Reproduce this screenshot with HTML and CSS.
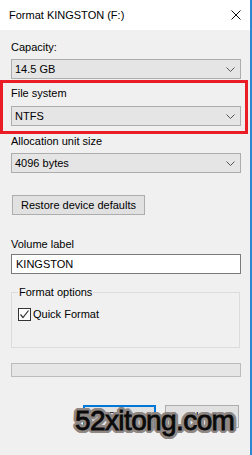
FILE: index.html
```html
<!DOCTYPE html>
<html lang="en">
<head>
    <meta charset="UTF-8">
    <meta name="viewport" content="width=device-width, initial-scale=1.0">
    <title>Format KINGSTON (F:)</title>
    <link rel="stylesheet" href="styles.css">
</head>
<body>
    <div class="window">
        <div class="titlebar">
            <span class="title">Format KINGSTON (F:)</span>
            <svg class="close-x" width="10" height="10" viewBox="0 0 10 10">
                <path d="M0.5 0.5 L9.5 9.5 M9.5 0.5 L0.5 9.5" stroke="#111" stroke-width="1" fill="none"/>
            </svg>
        </div>

        <div class="content">
            <label class="field-label cap-label">Capacity:</label>
            <div class="select first">
                <span>14.5 GB</span>
                <svg class="chevron" width="9" height="5" viewBox="0 0 9 5"><path d="M0.5 0.5 L4.5 4.5 L8.5 0.5" stroke="#555" fill="none"/></svg>
            </div>

            <!-- 赤枠で囲まれた部分 -->
            <div class="highlight">
                <label class="field-label">File system</label>
                <div class="select fs">
                    <span>NTFS</span>
                    <svg class="chevron" width="9" height="5" viewBox="0 0 9 5"><path d="M0.5 0.5 L4.5 4.5 L8.5 0.5" stroke="#555" fill="none"/></svg>
                </div>
            </div>

            <label class="field-label">Allocation unit size</label>
            <div class="select first">
                <span>4096 bytes</span>
                <svg class="chevron" width="9" height="5" viewBox="0 0 9 5"><path d="M0.5 0.5 L4.5 4.5 L8.5 0.5" stroke="#555" fill="none"/></svg>
            </div>

            <button class="btn restore">Restore device defaults</button>

            <label class="field-label vol-label">Volume label</label>
            <div class="textbox">KINGSTON</div>

            <fieldset class="options">
                <legend>Format options</legend>
                <div class="check-row">
                    <span class="checkbox">
                        <svg width="11" height="11" viewBox="0 0 11 11"><path d="M1.5 5.5 L4 8.5 L9.5 1.5" stroke="#333" stroke-width="1.2" fill="none"/></svg>
                    </span>
                    <span>Quick Format</span>
                </div>
            </fieldset>

            <div class="progress"></div>

            <div class="buttons">
                <button class="btn start">Start</button>
                <button class="btn close">Close</button>
            </div>
        </div>

        <div class="watermark">52xitong.com</div>
    </div>
</body>
</html>
```

FILE: styles.css
```css
/* ウィンドウ全体 */
body {
    margin: 0;
    font-family: 'Liberation Sans', Arial, sans-serif;
    font-size: 11px;
    line-height: 15px;
    color: #000;
    background-color: #f0f0f0;
}

.window {
    position: relative;
    width: 252px;
    height: 455px;
    box-sizing: border-box;
    border-right: 2px solid #2b87d4;
    overflow: hidden;
}

/* タイトルバー */
.titlebar {
    height: 30px;
    background-color: #ffffff;
    display: flex;
    align-items: center;
    justify-content: space-between;
    padding: 0 9px;
}

.close-x {
    display: block;
}

.content {
    padding: 0 9px 0 11px;
}

.field-label {
    display: block;
}

.cap-label {
    margin-top: 10px;
}

.vol-label {
    margin-top: 22px;
}

/* ドロップダウン */
.select {
    height: 20px;
    box-sizing: border-box;
    border: 1px solid #adadad;
    background-color: #e5e5e5;
    display: flex;
    align-items: center;
    justify-content: space-between;
    padding: 0 5px 0 3px;
}

.select.first {
    margin-top: 4px;
}

.select.fs {
    margin-top: 5px;
}

.chevron {
    display: block;
}

.highlight {
    margin: 1px -7px 0 -11px;
    border: 3px solid #ea1c25;
    padding: 3px 4px 5px 8px;
}

/* ボタン */
.btn {
    font-family: inherit;
    font-size: 11px;
    line-height: 15px;
    color: #000;
    background-color: #e1e1e1;
    border: 1px solid #adadad;
    padding: 0;
    box-sizing: border-box;
}

.restore {
    display: block;
    margin: 22px 0 0 1px;
    width: 133px;
    height: 20px;
}

.textbox {
    margin-top: 2px;
    height: 20px;
    box-sizing: border-box;
    border: 1px solid #7a7a7a;
    background-color: #ffffff;
    padding: 1px 4px;
    line-height: 16px;
}

/* フォーマットオプション */
.options {
    margin: 11px 1px 0 0;
    border: 1px solid #dcdcdc;
    padding: 7px 6px 25px;
}

.options legend {
    padding: 0 1px;
}

.check-row {
    display: flex;
    align-items: center;
    gap: 2px;
    height: 15px;
}

.checkbox {
    width: 13px;
    height: 13px;
    box-sizing: border-box;
    border: 1px solid #333;
    background-color: #ffffff;
    display: flex;
    align-items: center;
    justify-content: center;
}

.checkbox svg {
    display: block;
}

.progress {
    margin-top: 15px;
    height: 14px;
    box-sizing: border-box;
    border: 1px solid #bcbcbc;
    background-color: #e6e6e6;
}

.buttons {
    margin: 28px 2px 0 0;
    display: flex;
    justify-content: flex-end;
    gap: 9px;
}

.start,
.close {
    width: 73px;
    height: 23px;
}

.start {
    border: 2px solid #0078d7;
}

.close {
    width: 74px;
}

/* 透かしロゴ */
.watermark {
    position: absolute;
    left: 75px;
    top: 407px;
    font-size: 28px;
    line-height: 28px;
    letter-spacing: -0.6px;
    color: #0a0a0a;
    -webkit-text-stroke: 0.8px #0a0a0a;
    text-shadow:
        3px 0 0 #8f8784, -3px 0 0 #8f8784, 0 3px 0 #8f8784, 0 -3px 0 #8f8784,
        2px 2px 0 #8f8784, -2px 2px 0 #8f8784, 2px -2px 0 #8f8784, -2px -2px 0 #8f8784,
        3px 1px 0 #8f8784, -3px 1px 0 #8f8784, 3px -1px 0 #8f8784, -3px -1px 0 #8f8784,
        1px 3px 0 #8f8784, -1px 3px 0 #8f8784, 1px -3px 0 #8f8784, -1px -3px 0 #8f8784;
}
```
